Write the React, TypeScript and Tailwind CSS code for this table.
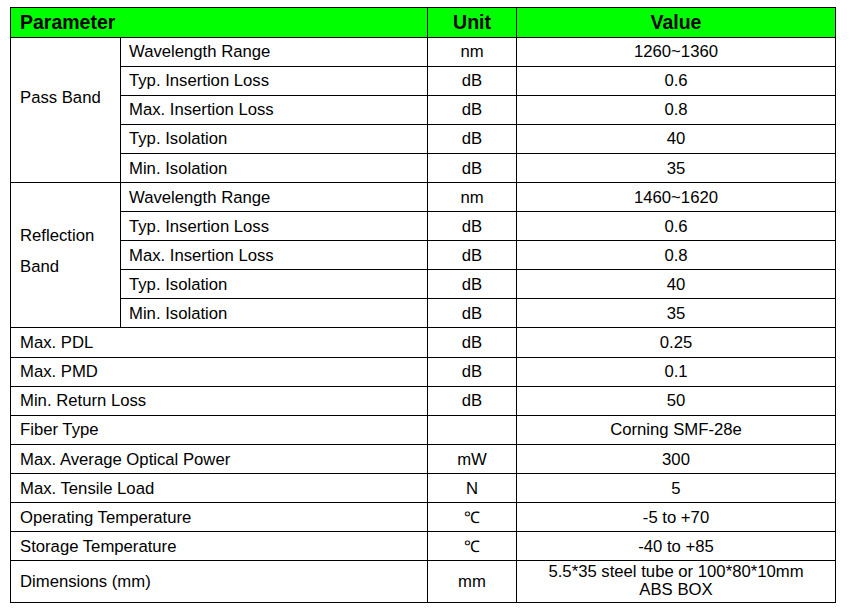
const passBand = [
  { name: "Wavelength Range", unit: "nm", value: "1260~1360" },
  { name: "Typ. Insertion Loss", unit: "dB", value: "0.6" },
  { name: "Max. Insertion Loss", unit: "dB", value: "0.8" },
  { name: "Typ. Isolation", unit: "dB", value: "40" },
  { name: "Min. Isolation", unit: "dB", value: "35" },
];

const reflectionBand = [
  { name: "Wavelength Range", unit: "nm", value: "1460~1620" },
  { name: "Typ. Insertion Loss", unit: "dB", value: "0.6" },
  { name: "Max. Insertion Loss", unit: "dB", value: "0.8" },
  { name: "Typ. Isolation", unit: "dB", value: "40" },
  { name: "Min. Isolation", unit: "dB", value: "35" },
];

const general = [
  { name: "Max. PDL", unit: "dB", value: "0.25" },
  { name: "Max. PMD", unit: "dB", value: "0.1" },
  { name: "Min. Return Loss", unit: "dB", value: "50" },
  { name: "Fiber Type", unit: "", value: "Corning SMF-28e" },
  { name: "Max. Average Optical Power", unit: "mW", value: "300" },
  { name: "Max. Tensile Load", unit: "N", value: "5" },
  { name: "Operating Temperature", unit: "℃", value: "-5 to +70" },
  { name: "Storage Temperature", unit: "℃", value: "-40 to +85" },
];

const cell = "border border-black";
const body = "border border-black pt-[2px]";

function UnitCell({ unit }: { unit: string }) {
  if (unit === "℃") {
    return (
      <td className={`${body} text-center text-[16px] font-['Liberation_Serif',serif]`}>
        {unit}
      </td>
    );
  }
  return <td className={`${body} text-center`}>{unit}</td>;
}

function BandRows({
  label,
  rows,
  labelClass,
}: {
  label: React.ReactNode;
  rows: typeof passBand;
  labelClass: string;
}) {
  return (
    <>
      {rows.map((r, i) => (
        <tr key={r.name} className="h-[29.1px]">
          {i === 0 && (
            <td rowSpan={rows.length} className={`${cell} pl-[9px] align-middle ${labelClass}`}>
              {label}
            </td>
          )}
          <td className={`${body} pl-[8px]`}>{r.name}</td>
          <UnitCell unit={r.unit} />
          <td className={`${body} text-center`}>{r.value}</td>
        </tr>
      ))}
    </>
  );
}

export default function App() {
  return (
    <div className="w-[854px] h-[609px] bg-white pt-[7px] pl-[10px] font-['Liberation_Sans',Arial,sans-serif] text-[16.7px] text-black">
      <table className="border-collapse w-[825px] table-fixed leading-none">
        <colgroup>
          <col className="w-[110px]" />
          <col className="w-[307px]" />
          <col className="w-[89px]" />
          <col className="w-[319px]" />
        </colgroup>
        <thead>
          <tr className="h-[29.5px] bg-[#00ff00] text-[19.5px] font-bold">
            <th colSpan={2} className={`${cell} text-left pl-[9px]`}>Parameter</th>
            <th className={`${cell} text-center`}>Unit</th>
            <th className={`${cell} text-center`}>Value</th>
          </tr>
        </thead>
        <tbody>
          <BandRows label="Pass Band" rows={passBand} labelClass="pb-[22px]" />
          <BandRows
            label={
              <div className="leading-[31px]">
                Reflection
                <br />
                Band
              </div>
            }
            rows={reflectionBand}
            labelClass="pb-[8px]"
          />
          {general.map((r) => (
            <tr key={r.name} className="h-[29.1px]">
              <td colSpan={2} className={`${body} pl-[9px]`}>{r.name}</td>
              <UnitCell unit={r.unit} />
              <td className={`${body} text-center`}>{r.value}</td>
            </tr>
          ))}
          <tr className="h-[42px]">
            <td colSpan={2} className={`${body} pl-[9px]`}>Dimensions (mm)</td>
            <td className={`${body} text-center`}>mm</td>
            <td className={`${cell} text-center leading-[18px] pb-[1px]`}>
              5.5*35 steel tube or 100*80*10mm
              <br />
              ABS BOX
            </td>
          </tr>
        </tbody>
      </table>
    </div>
  );
}
